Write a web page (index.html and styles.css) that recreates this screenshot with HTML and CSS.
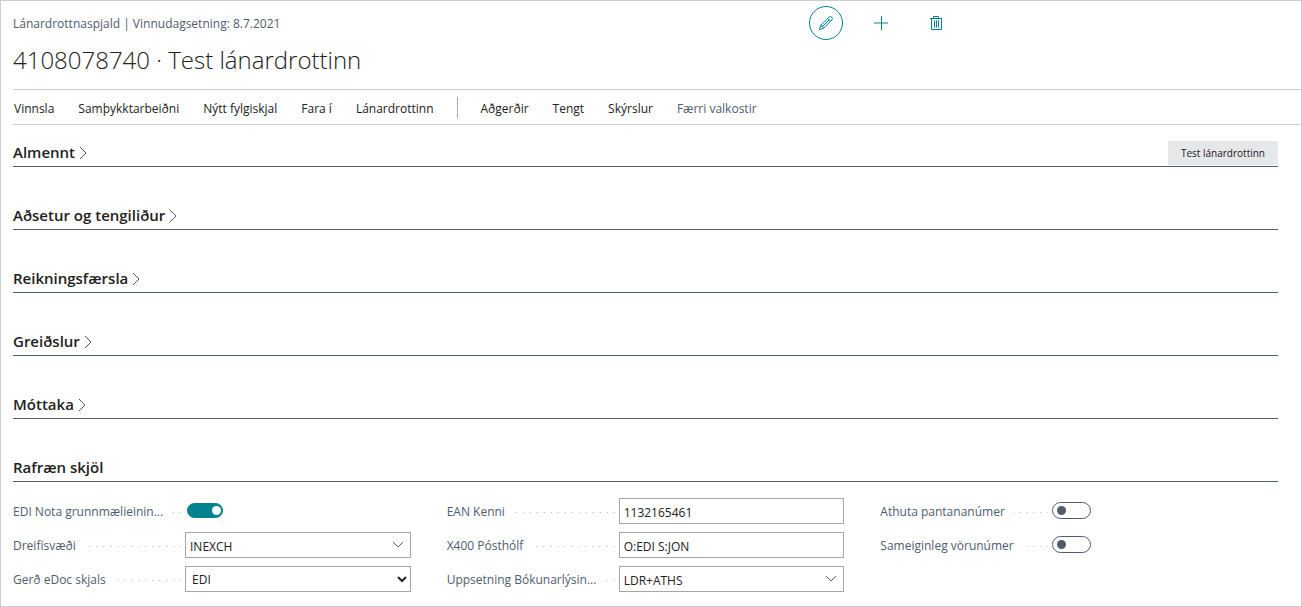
FILE: index.html
```html
<!DOCTYPE html>
<html lang="is">
<head>
<meta charset="utf-8">
<title>Lánardrottnaspjald</title>
<link rel="stylesheet" href="styles.css">
</head>
<body>
<main class="page">
  <header class="page-header">
    <div class="top-row">
      <p class="caption">Lánardrottnaspjald | Vinnudagsetning: 8.7.2021</p>
      <div class="actions">
        <button class="icon-button icon-button-active" type="button" aria-label="Breyta">
          <svg width="16" height="16" viewBox="0 0 16 16"><path d="M1.5 14.5 2.7 10.5 11 2.2Q12.4 1 13.8 2.2 15 3.6 13.8 5L5.5 13.3ZM2.7 10.5Q4.9 11 5.5 13.3M9.7 3.5l2.8 2.8M4.2 11.8l7-7"/></svg>
        </button>
        <button class="icon-button" type="button" aria-label="Nýtt">
          <svg width="16" height="16" viewBox="0 0 16 16"><path d="M8.5 1v14M1 8h14"/></svg>
        </button>
        <button class="icon-button" type="button" aria-label="Eyða">
          <svg width="16" height="16" viewBox="0 0 16 16"><path d="M2 3.5h12M5.5 3V1.5h5V3M3.5 4v10.5h10V4M6.5 5.5v7M8.5 5.5v7M10.5 5.5v7"/></svg>
        </button>
      </div>
    </div>
    <h1 class="title">4108078740 · Test lánardrottinn</h1>
  </header>

  <nav class="toolbar">
    <button class="menu" type="button">Vinnsla</button>
    <button class="menu" type="button">Samþykktarbeiðni</button>
    <button class="menu" type="button">Nýtt fylgiskjal</button>
    <button class="menu" type="button">Fara í</button>
    <button class="menu" type="button">Lánardrottinn</button>
    <span class="divider"></span>
    <button class="menu" type="button">Aðgerðir</button>
    <button class="menu" type="button">Tengt</button>
    <button class="menu" type="button">Skýrslur</button>
    <button class="menu menu-muted" type="button">Færri valkostir</button>
  </nav>

  <div class="content">
    <section class="group">
      <h2 class="group-title"><button class="group-toggle" type="button">Almennt<svg class="chevron" width="8" height="14" viewBox="0 0 8 14"><path d="M1 1l6 6-6 6"/></svg></button></h2>
      <button class="summary" type="button">Test lánardrottinn</button>
    </section>
    <section class="group">
      <h2 class="group-title"><button class="group-toggle" type="button">Aðsetur og tengiliður<svg class="chevron" width="8" height="14" viewBox="0 0 8 14"><path d="M1 1l6 6-6 6"/></svg></button></h2>
    </section>
    <section class="group">
      <h2 class="group-title"><button class="group-toggle" type="button">Reikningsfærsla<svg class="chevron" width="8" height="14" viewBox="0 0 8 14"><path d="M1 1l6 6-6 6"/></svg></button></h2>
    </section>
    <section class="group">
      <h2 class="group-title"><button class="group-toggle" type="button">Greiðslur<svg class="chevron" width="8" height="14" viewBox="0 0 8 14"><path d="M1 1l6 6-6 6"/></svg></button></h2>
    </section>
    <section class="group">
      <h2 class="group-title"><button class="group-toggle" type="button">Móttaka<svg class="chevron" width="8" height="14" viewBox="0 0 8 14"><path d="M1 1l6 6-6 6"/></svg></button></h2>
    </section>
    <section class="group">
      <h2 class="group-title"><button class="group-toggle" type="button">Rafræn skjöl</button></h2>
    </section>

    <form class="fields">
      <div class="column">
        <div class="field">
          <label class="label" for="base-unit">EDI Nota grunnmælieinin...</label>
          <div class="control"><input class="switch" id="base-unit" type="checkbox" checked></div>
        </div>
        <div class="field">
          <label class="label" for="area">Dreifisvæði</label>
          <div class="control box">
            <input class="text" id="area" type="text" value="INEXCH">
            <button class="lookup" type="button" aria-label="Velja dreifisvæði"><svg width="12" height="8" viewBox="0 0 12 8"><path d="M1 1l5 5 5-5"/></svg></button>
          </div>
        </div>
        <div class="field">
          <label class="label" for="doc-type">Gerð eDoc skjals</label>
          <div class="control box"><select class="select" id="doc-type"><option>EDI</option></select></div>
        </div>
      </div>
      <div class="column">
        <div class="field">
          <label class="label" for="ean">EAN Kenni</label>
          <div class="control box"><input class="text" id="ean" type="text" value="1132165461"></div>
        </div>
        <div class="field">
          <label class="label" for="x400">X400 Pósthólf</label>
          <div class="control box"><input class="text" id="x400" type="text" value="O:EDI S:JON"></div>
        </div>
        <div class="field">
          <label class="label" for="posting">Uppsetning Bókunarlýsin...</label>
          <div class="control box">
            <input class="text" id="posting" type="text" value="LDR+ATHS">
            <button class="lookup" type="button" aria-label="Velja uppsetningu"><svg width="12" height="8" viewBox="0 0 12 8"><path d="M1 1l5 5 5-5"/></svg></button>
          </div>
        </div>
      </div>
      <div class="column">
        <div class="field">
          <label class="label" for="check-orders">Athuta pantananúmer</label>
          <div class="control"><input class="switch" id="check-orders" type="checkbox"></div>
        </div>
        <div class="field">
          <label class="label" for="common-items">Sameiginleg vörunúmer</label>
          <div class="control"><input class="switch" id="common-items" type="checkbox"></div>
        </div>
      </div>
    </form>
  </div>
</main>
</body>
</html>
```
FILE: styles.css
```css
* { box-sizing: border-box; }

body {
  margin: 0;
  background: #fff;
  color: #212121;
  font-family: "Open Sans", "Noto Sans", sans-serif;
  font-size: 12px;
  line-height: 16px;
}

button, input, select {
  font: inherit;
  color: inherit;
}

button {
  padding: 0;
  border: 0;
  background: none;
  cursor: pointer;
}

svg {
  display: block;
  fill: none;
  stroke: currentColor;
}

.page {
  min-height: 100vh;
  padding-left: 12px;
  border: 1px solid #ccc;
}

.page-header { padding-top: 5px; }

.top-row {
  display: grid;
  grid-template-columns: 62% auto;
  align-items: center;
}

.caption {
  margin: 0;
  padding-top: 2px;
  color: #505c6d;
}

.actions {
  display: flex;
  gap: 21px;
  margin-left: -3px;
  color: #00838f;
}

.icon-button {
  display: flex;
  align-items: center;
  justify-content: center;
  width: 34px;
  height: 34px;
}

.icon-button-active {
  border: 1px solid #00838f;
  border-radius: 50%;
}

.title {
  margin: 2px 0 11px;
  font-size: 24px;
  font-weight: 300;
  line-height: 36px;
}

.toolbar {
  display: flex;
  align-items: center;
  gap: 24px;
  height: 36px;
  padding-left: 1px;
  border-top: 1px solid #ccd0d4;
  border-bottom: 1px solid #ccd0d4;
}

.menu {
  padding-top: 3px;
  white-space: nowrap;
}

.menu-muted { color: #505c6d; }

.divider {
  width: 1px;
  height: 21px;
  margin: 0 -1px;
  background: #a6a9b0;
}

.content { padding-right: 23px; }

.group {
  display: flex;
  align-items: flex-end;
  justify-content: space-between;
  height: 42px;
  margin-bottom: 21px;
  padding-bottom: 1px;
  border-bottom: 1px solid #505c6d;
}

.group:last-of-type { margin-bottom: 16px; }

.group-title {
  margin: 0 0 1px;
  font-size: 15px;
  font-weight: 600;
  line-height: 24px;
}

.group-toggle {
  display: flex;
  align-items: center;
  gap: 4px;
}

.chevron {
  margin-top: 2px;
  color: #505050;
}

.summary {
  height: 24px;
  padding: 0 13px;
  background: #e6e7e9;
  font-size: 10px;
}

.fields {
  display: grid;
  grid-template-columns: repeat(3, 1fr);
  gap: 36px;
}

.column {
  display: flex;
  flex-direction: column;
  gap: 8px;
}

.field {
  display: grid;
  grid-template-columns: 172px minmax(0, 1fr);
  align-items: center;
  height: 26px;
}

.label {
  display: flex;
  align-items: center;
  gap: 8px;
  padding: 2px 4px 0 0;
  color: #505c6d;
  white-space: nowrap;
}

.label::after {
  content: "";
  flex: 1;
  height: 1px;
  background: linear-gradient(90deg, transparent 6px, #a8adb5 6px) right top / 7px 1px repeat-x;
}

.control {
  display: flex;
  align-items: center;
}

.box {
  height: 26px;
  border: 1px solid #a6a6a6;
}

.text {
  flex: 1;
  min-width: 0;
  height: 24px;
  padding: 2px 4px 0;
  border: 0;
  background: none;
}

.lookup {
  padding: 0 6px;
  color: #606060;
}

.select {
  width: 100%;
  height: 24px;
  padding: 0 0 0 2px;
  border: 0;
  background: #fff;
}

.switch {
  appearance: none;
  display: flex;
  align-items: center;
  width: 39px;
  height: 17px;
  margin: 0 0 2px;
  padding: 0 4px;
  border: 1px solid #505c6d;
  border-radius: 9px;
}

.switch::before {
  content: "";
  width: 9px;
  height: 9px;
  border-radius: 50%;
  background: #505c6d;
}

.switch:checked {
  justify-content: flex-end;
  width: 36px;
  height: 15px;
  margin-left: 2px;
  padding: 0 1px;
  border-color: #00838f;
  background: #00838f;
}

.switch:checked::before { background: #fff; }
```
